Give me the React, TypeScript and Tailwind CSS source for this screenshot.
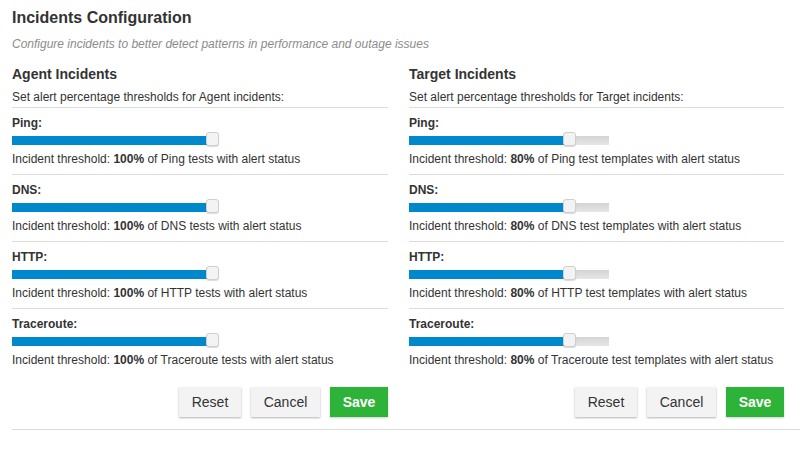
import React from "react";

const types = ["Ping", "DNS", "HTTP", "Traceroute"];

function Slider({ pct }: { pct: number }) {
  const w = (pct / 100) * 200;
  return (
    <div className="relative mt-[1px] h-[14px] w-[200px]">
      <div className="absolute left-0 top-[4px] h-[9px] w-[200px] bg-gradient-to-b from-[#d4d4d4] to-[#e6e6e6]" />
      <div className="absolute left-0 top-[4px] h-[9px] bg-[#0088cc]" style={{ width: w }} />
      <div
        className="absolute top-0 h-[14px] w-[13px] rounded-[3px] border border-[#cfcfcf] bg-[#f3f3f3] shadow-[0_1px_1px_rgba(0,0,0,0.15)]"
        style={{ left: w - 6.5 }}
      />
    </div>
  );
}

function Column({ title, desc, pct, suffix }: { title: string; desc: string; pct: number; suffix: string }) {
  return (
    <div className="flex flex-col">
      <div className="text-[14px] font-bold leading-[16px] text-[#333]">{title}</div>
      <div className="mt-[7px] border-b border-[#dcdcdc] pb-[2px] text-[12px] leading-[16px] text-[#333]">{desc}</div>
      {types.map((t, i) => (
        <div key={t} className={`pt-[7px] pb-[7px] ${i < 3 ? "border-b border-[#dcdcdc]" : ""}`}>
          <div className="text-[12px] font-bold leading-[16px] text-[#333]">{t}:</div>
          <Slider pct={pct} />
          <div className="mt-[5px] text-[12px] leading-[16px] text-[#333]">
            Incident threshold: <b>{pct}%</b> of {t} {suffix} with alert status
          </div>
        </div>
      ))}
      <div className="mt-[12px] flex justify-end gap-[10px]">
        <button className="h-[30px] w-[62px] bg-[#f3f3f3] text-[14px] text-[#333] shadow-[0_1px_2px_rgba(0,0,0,0.3)]">Reset</button>
        <button className="h-[30px] w-[69px] bg-[#f3f3f3] text-[14px] text-[#333] shadow-[0_1px_2px_rgba(0,0,0,0.3)]">Cancel</button>
        <button className="h-[30px] w-[58px] bg-[#2db337] text-[14px] font-bold text-white shadow-[0_1px_2px_rgba(0,0,0,0.2)]">Save</button>
      </div>
    </div>
  );
}

export default function App() {
  return (
    <div className="min-h-[452px] w-[811px] bg-white pl-[12px] pr-[11px] pt-[8px]" style={{ fontFamily: '"Liberation Sans", Arial, sans-serif' }}>
      <div className="text-[16px] font-bold leading-[20px] text-[#333]">Incidents Configuration</div>
      <div className="mt-[8px] text-[12px] italic leading-[16px] text-[#8c8c8c]">
        Configure incidents to better detect patterns in performance and outage issues
      </div>
      <div className="mt-[14px] grid grid-cols-[376px_375px] gap-x-[21px]">
        <Column title="Agent Incidents" desc="Set alert percentage thresholds for Agent incidents:" pct={100} suffix="tests" />
        <Column title="Target Incidents" desc="Set alert percentage thresholds for Target incidents:" pct={80} suffix="test templates" />
      </div>
      <div className="mt-[12px] border-b border-[#dcdcdc]" />
    </div>
  );
}
